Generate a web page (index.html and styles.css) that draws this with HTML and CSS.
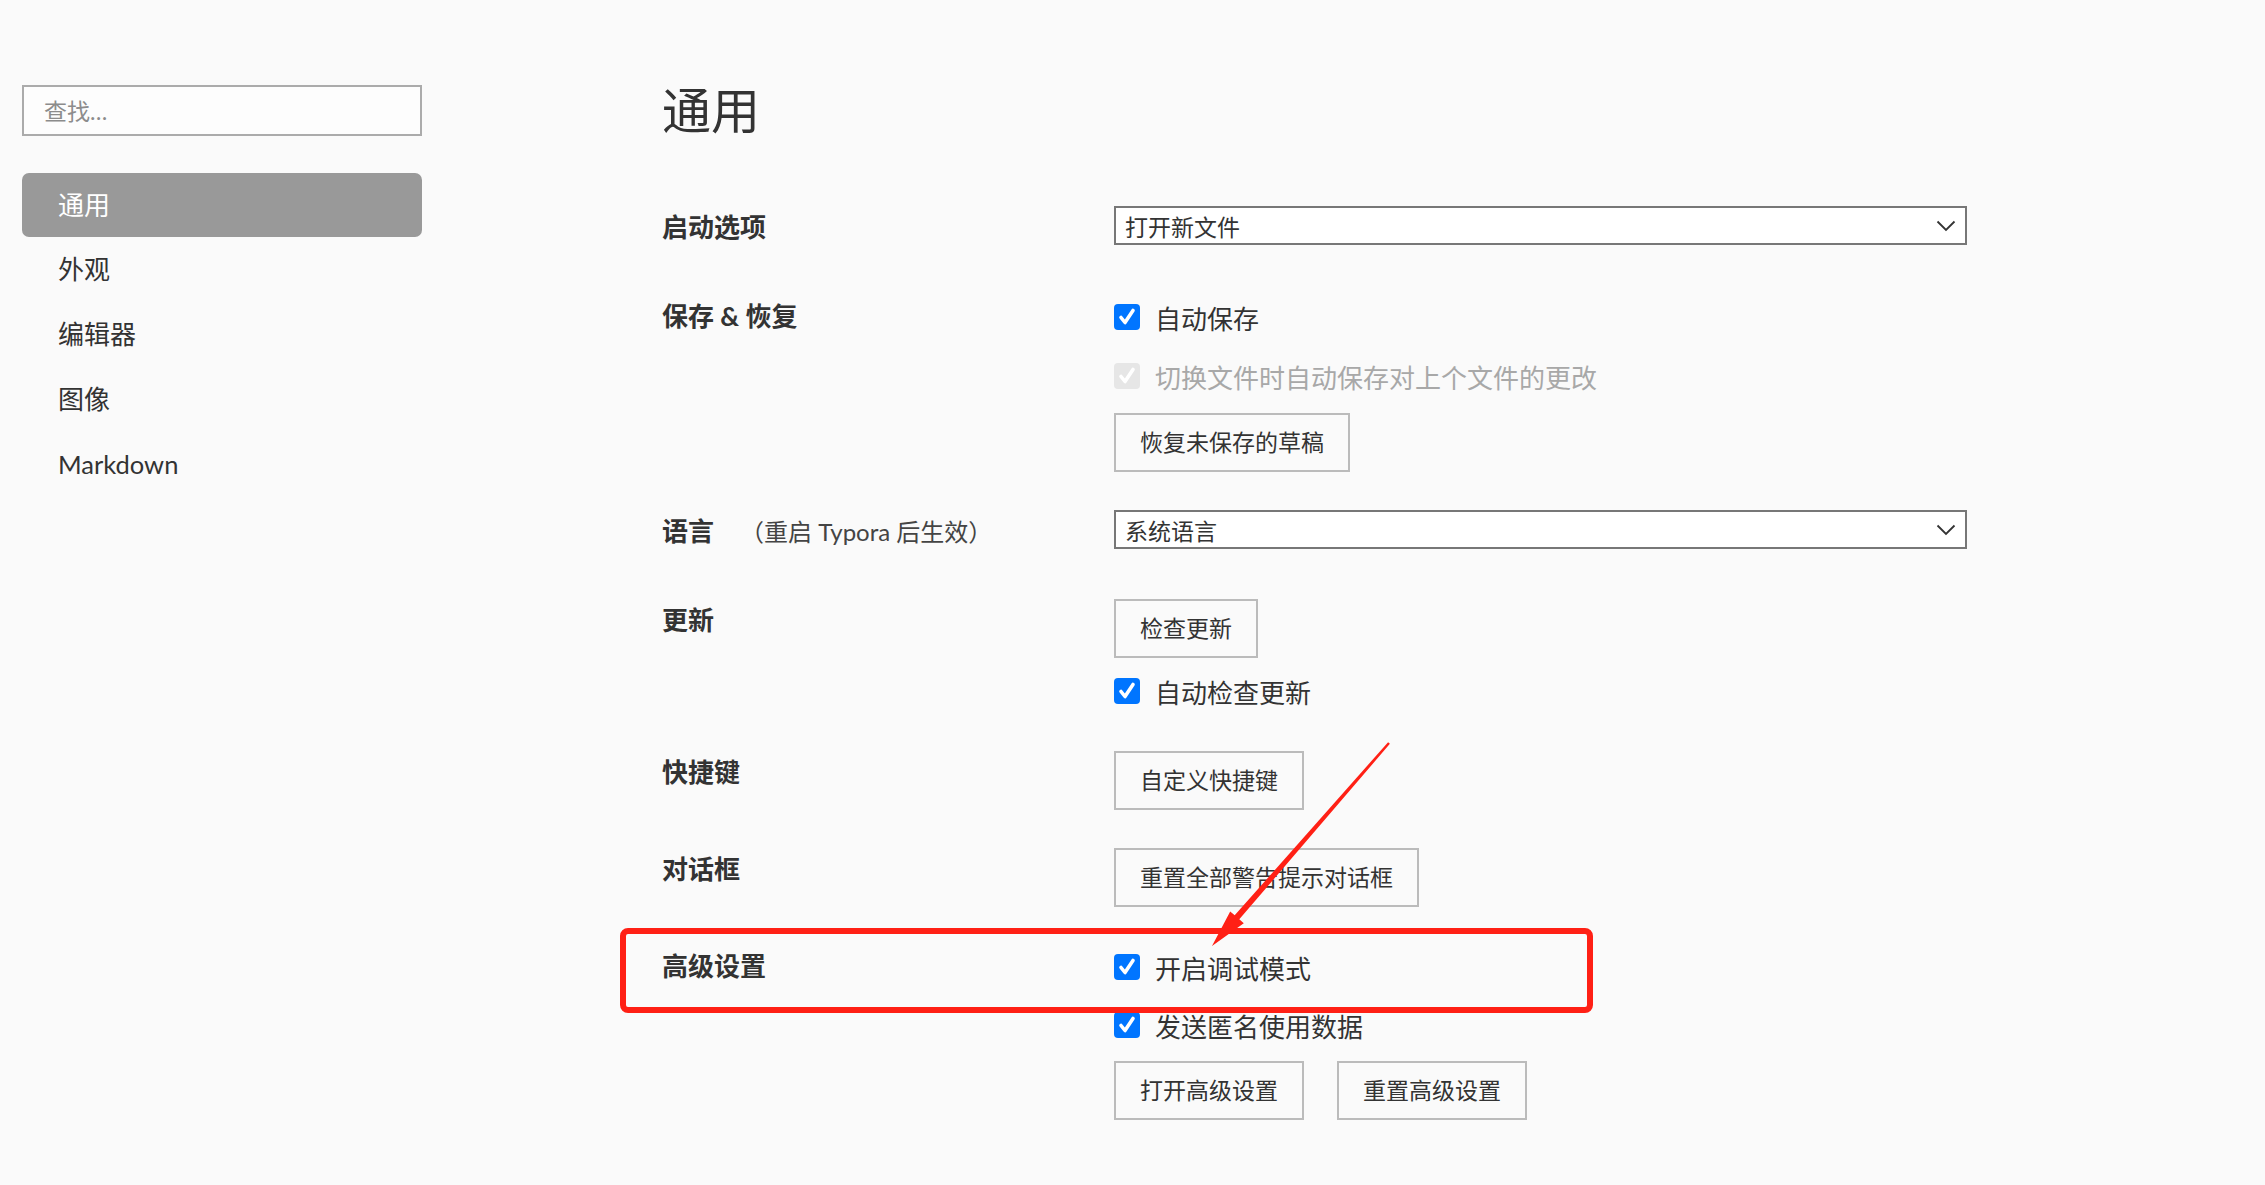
FILE: index.html
```html
<!DOCTYPE html>
<html lang="zh-CN">
<head>
<meta charset="utf-8">
<title>偏好设置 - 通用</title>
<link rel="stylesheet" href="styles.css">
</head>
<body>
<div class="page">
  <aside class="sidebar">
    <input class="search" type="text" placeholder="查找…">
    <nav class="menu">
      <div class="menu-item active">通用</div>
      <div class="menu-item">外观</div>
      <div class="menu-item">编辑器</div>
      <div class="menu-item">图像</div>
      <div class="menu-item latin">Markdown</div>
    </nav>
  </aside>

  <main class="main">
    <h1 class="title">通用</h1>
    <div class="rows">
      <section class="row">
        <div class="label">启动选项</div>
        <div class="controls">
          <div class="select">
            <span>打开新文件</span>
            <svg class="chevron" width="20" height="12" viewBox="0 0 20 12"><path d="M1.5 1.5 L10 10 L18.5 1.5" fill="none" stroke="#333" stroke-width="1.8"/></svg>
          </div>
        </div>
      </section>

      <section class="row">
        <div class="label">保存 &amp; 恢复</div>
        <div class="controls">
          <div class="check">
            <span class="box"><svg width="26" height="26" viewBox="0 0 26 26"><path d="M7 13.5 L11 18.5 L19 6.5" fill="none" stroke="#fff" stroke-width="3.6" stroke-linecap="round" stroke-linejoin="round"/></svg></span>
            <span>自动保存</span>
          </div>
          <div class="check disabled">
            <span class="box"><svg width="26" height="26" viewBox="0 0 26 26"><path d="M7 13.5 L11 18.5 L19 6.5" fill="none" stroke="#fff" stroke-width="3.6" stroke-linecap="round" stroke-linejoin="round"/></svg></span>
            <span>切换文件时自动保存对上个文件的更改</span>
          </div>
          <button class="btn">恢复未保存的草稿</button>
        </div>
      </section>

      <section class="row">
        <div class="label">语言<span class="note">（重启 Typora 后生效）</span></div>
        <div class="controls">
          <div class="select">
            <span>系统语言</span>
            <svg class="chevron" width="20" height="12" viewBox="0 0 20 12"><path d="M1.5 1.5 L10 10 L18.5 1.5" fill="none" stroke="#333" stroke-width="1.8"/></svg>
          </div>
        </div>
      </section>

      <section class="row">
        <div class="label">更新</div>
        <div class="controls">
          <button class="btn">检查更新</button>
          <div class="check after-btn">
            <span class="box"><svg width="26" height="26" viewBox="0 0 26 26"><path d="M7 13.5 L11 18.5 L19 6.5" fill="none" stroke="#fff" stroke-width="3.6" stroke-linecap="round" stroke-linejoin="round"/></svg></span>
            <span>自动检查更新</span>
          </div>
        </div>
      </section>

      <section class="row">
        <div class="label">快捷键</div>
        <div class="controls">
          <button class="btn">自定义快捷键</button>
        </div>
      </section>

      <section class="row">
        <div class="label">对话框</div>
        <div class="controls">
          <button class="btn">重置全部警告提示对话框</button>
        </div>
      </section>

      <section class="row">
        <div class="label">高级设置</div>
        <div class="controls tight">
          <div class="check">
            <span class="box"><svg width="26" height="26" viewBox="0 0 26 26"><path d="M7 13.5 L11 18.5 L19 6.5" fill="none" stroke="#fff" stroke-width="3.6" stroke-linecap="round" stroke-linejoin="round"/></svg></span>
            <span>开启调试模式</span>
          </div>
          <div class="check">
            <span class="box"><svg width="26" height="26" viewBox="0 0 26 26"><path d="M7 13.5 L11 18.5 L19 6.5" fill="none" stroke="#fff" stroke-width="3.6" stroke-linecap="round" stroke-linejoin="round"/></svg></span>
            <span>发送匿名使用数据</span>
          </div>
          <div class="btn-group">
            <button class="btn">打开高级设置</button>
            <button class="btn">重置高级设置</button>
          </div>
        </div>
      </section>
    </div>
  </main>

  <svg class="annot" width="2265" height="1185" viewBox="0 0 2265 1185">
    <rect x="623" y="931" width="967" height="79" rx="5" ry="5" fill="none" stroke="#ff2015" stroke-width="6"/>
    <polygon fill="#ff2015" points="1388.1,742.2 1389.9,743.8 1239.3,919.3 1243.8,923.2 1212,946 1230.2,911.4 1234.7,915.3"/>
  </svg>
</div>
</body>
</html>
```

FILE: styles.css
```css
html, body {
  margin: 0;
  padding: 0;
}

body {
  background: #fafafa;
  color: #333;
  font-family: "Lato", "Noto Sans CJK SC", sans-serif;
}

.page {
  position: relative;
  display: flex;
  height: 1185px;
  overflow: hidden;
}

/* ---------- sidebar ---------- */
.sidebar {
  flex: none;
  width: 400px;
  padding: 85px 0 0 22px;
}

.search {
  display: block;
  box-sizing: border-box;
  width: 400px;
  height: 51px;
  margin: 0;
  padding: 0 0 0 20px;
  border: 2px solid #ababab;
  border-radius: 0;
  background: #fdfdfd;
  color: #333;
  font-family: "Lato", "Noto Sans CJK SC", sans-serif;
  font-size: 23px;
  outline: none;
}

.search::placeholder {
  color: #8c8c8c;
}

.menu {
  display: flex;
  flex-direction: column;
  margin-top: 37px;
}

.menu-item {
  height: 65px;
  line-height: 65px;
  padding-left: 36px;
  font-size: 26px;
  color: #333;
  border-radius: 7px;
}

.menu-item.latin {
  font-size: 25.5px;
}

.menu-item.active {
  height: 64px;
  line-height: 64px;
  background: #999;
  color: #fff;
}

/* ---------- main ---------- */
.main {
  flex: none;
  margin-left: 240px;
  padding-top: 80px;
}

.title {
  margin: 0 0 66px;
  font-size: 49px;
  line-height: 60px;
  font-weight: 400;
  color: #333;
}

.rows {
  display: flex;
  flex-direction: column;
  gap: 38px;
}

.row {
  display: grid;
  grid-template-columns: 452px 853px;
  align-items: start;
}

.label {
  font-size: 26px;
  font-weight: 700;
  line-height: 42px;
  color: #333;
  white-space: nowrap;
}

.note {
  margin-left: 26px;
  font-size: 24px;
  font-weight: 400;
  color: #444;
}

.controls {
  display: flex;
  flex-direction: column;
  align-items: flex-start;
  gap: 15px;
}

.controls.tight {
  gap: 14px;
}

.select {
  box-sizing: border-box;
  width: 853px;
  height: 39px;
  margin-bottom: 12px;
  padding: 0 9px 0 9px;
  border: 2px solid #777;
  background: #fff;
  display: flex;
  align-items: center;
  justify-content: space-between;
  font-size: 23px;
  color: #333;
}

.chevron {
  display: block;
}

.check {
  display: flex;
  align-items: center;
  gap: 15px;
  height: 44px;
  font-size: 26px;
  color: #333;
}

.check.after-btn {
  margin-top: -4px;
}

.box {
  flex: none;
  width: 26px;
  height: 26px;
  border-radius: 4px;
  background: #0075ff;
  display: flex;
  align-items: center;
  justify-content: center;
}

.box svg {
  display: block;
}

.check.disabled {
  color: #a8a8a8;
}

.check.disabled .box {
  background: #e6e6e6;
}

.btn {
  box-sizing: border-box;
  height: 59px;
  margin: 0;
  padding: 0 24px 4px;
  border: 2px solid #bbb;
  border-radius: 0;
  background: #fafafa;
  color: #333;
  font-family: "Lato", "Noto Sans CJK SC", sans-serif;
  font-size: 23px;
  cursor: default;
}

.btn-group {
  display: flex;
  gap: 33px;
}

/* ---------- annotation overlay ---------- */
.annot {
  position: absolute;
  left: 0;
  top: 0;
  pointer-events: none;
}
```
